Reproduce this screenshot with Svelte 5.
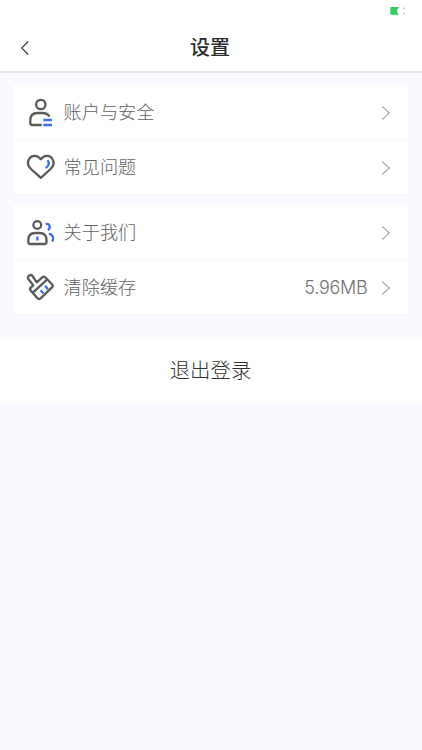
<script>
  const groups = [
    [
      { icon: 'account', label: '账户与安全' },
      { icon: 'heart', label: '常见问题' }
    ],
    [
      { icon: 'people', label: '关于我们' },
      { icon: 'brush', label: '清除缓存', value: '5.96MB' }
    ]
  ];
</script>

{#snippet glyph(name)}
  <svg class="icon" viewBox="0 0 40 40" width="40" height="40">
    {#if name === 'account'}
      <circle cx="20.8" cy="12.5" r="4.7" />
      <path d="M20.8 33H12.3Q10.3 33 10.3 31V28.5Q10.3 21 17.5 21H22.5Q26.5 21 29 23.8" />
      <path class="blue" d="M23.3 28H32M23.3 33H32" />
    {:else if name === 'heart'}
      <path d="M20.8 12.2C17.5 8 12 7.8 9.4 11.6C7 15 8 19 11 22L20.8 30.8L30.6 22C33.6 19 34.6 15 32.2 11.6C29.6 7.8 24.1 8 20.8 12.2Z" />
      <path class="blue" d="M27.3 13.3C30.1 15.5 28.8 19 25.6 21" />
    {:else if name === 'people'}
      <circle cx="17.3" cy="13" r="3.9" />
      <path d="M8.3 30V28.5C8.3 23.5 11 21 15 21H19.8C23.8 21 26.5 23.5 26.5 28.5V30Q26.5 32 24.5 32H10.3Q8.3 32 8.3 30Z" />
      <path class="blue" d="M17.4 24.5V28.6M25.7 11.9C30.2 11.3 31 16.3 27.8 18.1M28.8 21.9C33.2 22.3 34.2 26.6 32.2 29.5" />
    {:else}
      <path d="M16.8 15.3L12.5 9C10.8 6.8 6.8 8.9 8.3 12L13.3 18.2L10.6 20.8Q9.3 22 10.5 23.3L17.5 31.3Q19 33 20.6 31.3L32 20.4Q33.5 18.8 32 17.2L25.2 10.3Q23.8 9 22.3 10.3L16.8 15.3M12.6 25.8L27.3 12.4" />
      <path class="blue" d="M20.6 23.2L23.4 26.6M25.1 18.8L27.9 22.2" />
    {/if}
  </svg>
{/snippet}

<main>
  <div class="status">
    <svg width="20" height="12" viewBox="0 0 20 12">
      <path fill="#38c963" d="M1.5 2H9L7.2 4.7V7L9 9.7H1.5Q.3 9.7 .3 8.5V3.2Q.3 2 1.5 2Z" />
      <path fill="#8fd8a5" d="M13.5 2.5H14.8V4H13.5ZM13.5 8H14.8V9.5H13.5Z" />
    </svg>
  </div>
  <header>
    <svg class="back" width="10" height="16" viewBox="0 0 10 16"><path d="M8.2 1.5L1.7 8L8.2 14.5" /></svg>
    <h1>设置</h1>
  </header>
  <div class="groups">
    {#each groups as group}
      <section>
        {#each group as row}
          <div class="row">
            {@render glyph(row.icon)}
            <span class="label">{row.label}</span>
            {#if row.value}<span class="value">{row.value}</span>{/if}
            <svg class="arrow" width="10" height="16" viewBox="0 0 10 16"><path d="M1.2 1.5L8.3 8L1.2 14.5" /></svg>
          </div>
        {/each}
      </section>
    {/each}
  </div>
  <button>退出登录</button>
</main>

<style>
  main {
    width: 100%;
    height: 750px;
    background: #f9faff;
    font-family: "Noto Sans CJK SC", sans-serif;
  }
  .status {
    box-sizing: border-box;
    height: 24px;
    padding: 5px 12px 0 0;
    display: flex;
    justify-content: flex-end;
    background: #fff;
  }
  header {
    box-sizing: border-box;
    height: 49px;
    padding-bottom: 1px;
    display: grid;
    grid-template-columns: 40px 1fr 40px;
    align-items: center;
    background: #fff;
    border-bottom: 2px solid #e7e7ea;
  }
  .back { margin: 1px 0 0 20px; }
  .back path { fill: none; stroke: #555; stroke-width: 1.5; }
  h1 {
    margin: 0;
    padding-right: 2px;
    font-size: 20px;
    line-height: 28px;
    font-weight: 500;
    text-align: center;
    color: #2b2b2b;
  }
  .groups {
    padding: 12.4px 14px 0 13px;
    display: flex;
    flex-direction: column;
    gap: 11px;
  }
  section {
    background: #fff;
    border-radius: 2px;
    box-shadow: 0 1px 1px #f5f5f7;
  }
  .row {
    box-sizing: border-box;
    height: 54.5px;
    padding: 0 17px 1px 7px;
    display: flex;
    align-items: center;
  }
  .row + .row { border-top: 1px solid #f6f6f8; }
  .icon {
    flex: none;
    fill: none;
    stroke: #5a5a5a;
    stroke-width: 2.3;
    stroke-linecap: round;
    stroke-linejoin: round;
  }
  .blue { stroke: #3c6fe8; stroke-linecap: butt; }
  .label {
    flex: 1;
    margin-left: 3.5px;
    padding-bottom: 1.5px;
    font-size: 18.2px;
    line-height: 26px;
    font-weight: 300;
    color: #626262;
  }
  .value {
    margin-right: 13.5px;
    padding-top: 1px;
    font-family: Inter, sans-serif;
    font-size: 18px;
    letter-spacing: -0.25px;
    font-weight: 300;
    color: #707070;
  }
  .arrow { margin-top: 1px; }
  .arrow path { fill: none; stroke: #aaa; stroke-width: 1.3; }
  button {
    display: block;
    width: 100%;
    height: 67px;
    margin-top: 22.6px;
    padding: 0 1px 3px 0;
    border: 0;
    background: #fff;
    color: #303030;
    font-family: inherit;
    font-size: 20.4px;
    font-weight: 300;
  }
</style>
